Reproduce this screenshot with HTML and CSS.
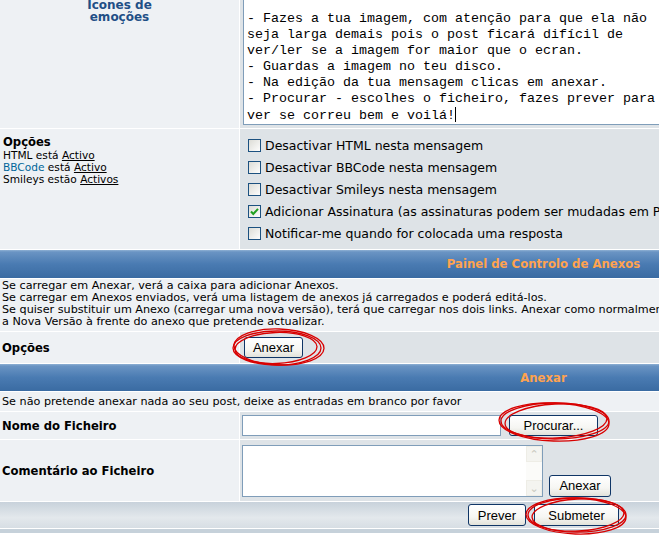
FILE: index.html
```html
<!DOCTYPE html>
<html lang="pt">
<head>
    <meta charset="UTF-8">
    <meta name="viewport" content="width=device-width, initial-scale=1.0">
    <title>Anexos</title>
    <link rel="stylesheet" href="styles.css">
</head>
<body>
    <div class="page">
        <table class="forumline">
            <colgroup>
                <col class="col-left">
                <col class="col-right">
            </colgroup>

            <!-- Mensagem -->
            <tr>
                <td class="row1 smilies"><a href="#" class="smilies-link">Ícones de<br>emoções</a></td>
                <td class="row2 msg-cell">
                    <div class="post-box">&nbsp;<br>- Fazes a tua imagem, com atenção para que ela não<br>seja larga demais pois o post ficará difícil de<br>ver/ler se a imagem for maior que o ecran.<br>- Guardas a imagem no teu disco.<br>- Na edição da tua mensagem clicas em anexar.<br>- Procurar - escolhes o ficheiro, fazes prever para<br>ver se correu bem e voilá!<span class="caret"></span></div>
                </td>
            </tr>

            <!-- Opções da mensagem -->
            <tr>
                <td class="row1 opts-info">
                    <div class="label">Opções</div>
                    <div class="small">HTML está <a href="#" class="u">Activo</a></div>
                    <div class="small"><a href="#" class="bb">BBCode</a> está <a href="#" class="u">Activo</a></div>
                    <div class="small">Smileys estão <a href="#" class="u">Activos</a></div>
                </td>
                <td class="row2 opts-list">
                    <div class="opt"><span class="cb"></span>Desactivar HTML nesta mensagem</div>
                    <div class="opt"><span class="cb"></span>Desactivar BBCode nesta mensagem</div>
                    <div class="opt"><span class="cb"></span>Desactivar Smileys nesta mensagem</div>
                    <div class="opt"><span class="cb checked"><svg width="11" height="11" viewBox="0 0 11 11"><path d="M2 5.5 L4.3 8 L9 2.8" fill="none" stroke="#21a121" stroke-width="2"/></svg></span>Adicionar Assinatura (as assinaturas podem ser mudadas em Perfil)</div>
                    <div class="opt"><span class="cb"></span>Notificar-me quando for colocada uma resposta</div>
                </td>
            </tr>

            <!-- Painel de anexos -->
            <tr>
                <th colspan="2" class="thHead h-painel">Painel de Controlo de Anexos</th>
            </tr>
            <tr>
                <td colspan="2" class="row1 info">
                    Se carregar em Anexar, verá a caixa para adicionar Anexos.<br>
                    Se carregar em Anexos enviados, verá uma listagem de anexos já carregados e poderá editá-los.<br>
                    Se quiser substituir um Anexo (carregar uma nova versão), terá que carregar nos dois links. Anexar como normalmente e depois carregar em Carregar<br>
                    a Nova Versão à frente do anexo que pretende actualizar.
                </td>
            </tr>
            <tr>
                <td class="row1 lbl r-opcoes"><span class="label">Opções</span></td>
                <td class="row2 r-opcoes-btn"><button class="btn btn-anexar">Anexar</button></td>
            </tr>

            <!-- Anexar -->
            <tr>
                <th colspan="2" class="thHead h-anexar">Anexar</th>
            </tr>
            <tr>
                <td colspan="2" class="row1 info-one">Se não pretende anexar nada ao seu post, deixe as entradas em branco por favor</td>
            </tr>
            <tr>
                <td class="row1 lbl r-nome"><span class="label">Nome do Ficheiro</span></td>
                <td class="row2 r-nome-in">
                    <div class="file-row">
                        <span class="file-input"></span>
                        <button class="btn btn-procurar">Procurar...</button>
                    </div>
                </td>
            </tr>
            <tr>
                <td class="row1 lbl r-coment"><span class="label">Comentário ao Ficheiro</span></td>
                <td class="row2 r-coment-in">
                    <div class="coment-row">
                        <div class="coment-box">
                            <div class="scroll">
                                <span class="arrow">&#8963;</span>
                                <span class="arrow down">&#8964;</span>
                            </div>
                        </div>
                        <button class="btn btn-anexar2">Anexar</button>
                    </div>
                </td>
            </tr>

            <!-- Botões finais -->
            <tr>
                <td colspan="2" class="catBottom">
                    <button class="btn btn-prever">Prever</button>
                    <button class="btn btn-submeter">Submeter</button>
                </td>
            </tr>
        </table>
        <div class="strip"></div>
    </div>

    <!-- Marcas a vermelho -->
    <svg class="marks" width="659" height="551" viewBox="0 0 659 551">
        <g fill="none" stroke="#d80000" stroke-width="1.3">
            <ellipse cx="277" cy="348" rx="44" ry="17"/>
            <ellipse cx="276" cy="348" rx="41" ry="15.5" transform="rotate(-2 276 348)"/>
            <ellipse cx="279" cy="347" rx="45" ry="18" transform="rotate(2 279 347)"/>

            <ellipse cx="555" cy="421" rx="54" ry="18"/>
            <ellipse cx="556" cy="421" rx="51" ry="17" transform="rotate(-3 556 421)"/>
            <ellipse cx="554" cy="422" rx="55" ry="19" transform="rotate(2 554 422)"/>

            <ellipse cx="577" cy="515" rx="49" ry="17"/>
            <ellipse cx="578" cy="515" rx="46" ry="16" transform="rotate(-3 578 515)"/>
            <ellipse cx="576" cy="516" rx="50" ry="18" transform="rotate(2 576 516)"/>
        </g>
    </svg>
</body>
</html>
```

FILE: styles.css
```css
body {
    margin: 0;
    background: #fff;
    overflow: hidden;
    font-family: "DejaVu Sans", Verdana, sans-serif;
    color: #000;
}

.page {
    width: 1089px;
    margin: -9px 0 0 -1px;
}

.forumline {
    width: 1089px;
    table-layout: fixed;
    border-collapse: separate;
    border-spacing: 1px;
    background: #fff;
}

.col-left {
    width: 239px;
}

td, th {
    padding: 0;
    box-sizing: border-box;
}

.row1 {
    background: #eef1f4;
}

.row2 {
    background: #dee3e7;
}

a {
    color: #000;
}

/* Linha da mensagem */
.smilies {
    vertical-align: top;
    text-align: center;
    padding-top: 7px;
    font-size: 12px;
    line-height: 12px;
}

.smilies-link {
    color: #1f4f86;
    font-size: 12px;
    font-weight: bold;
    text-decoration: none;
}

.msg-cell {
    padding: 3px 0 3px 3px;
    vertical-align: top;
}

.post-box {
    width: 600px;
    background: #fff;
    border: 1px solid #7f9db9;
    border-top: none;
    padding: 0 3px;
    font-family: "Liberation Mono", "Courier New", monospace;
    font-size: 13.33px;
    line-height: 16px;
    white-space: nowrap;
}

.caret {
    display: inline-block;
    width: 1px;
    height: 15px;
    background: #000;
    vertical-align: -3px;
}

/* Opções */
.opts-info {
    vertical-align: top;
    padding: 6px 3px;
}

.label {
    font-size: 11.6px;
    font-weight: bold;
    line-height: 14px;
}

.small {
    font-size: 10.6px;
    line-height: 12px;
}

.u {
    color: #000;
    text-decoration: underline;
}

.bb {
    color: #006699;
    text-decoration: none;
}

.opts-list {
    padding: 5px 0 5px 8px;
    vertical-align: top;
}

.opt {
    height: 22px;
    display: flex;
    align-items: center;
    font-size: 12.5px;
    white-space: nowrap;
}

.cb {
    width: 11px;
    height: 11px;
    border: 1px solid #1c5180;
    background: linear-gradient(135deg, #dcdcd6, #fdfdfd);
    margin-right: 4px;
    display: flex;
    align-items: center;
    justify-content: center;
    flex: none;
}

/* Cabeçalhos */
.thHead {
    height: 28px;
    background: linear-gradient(to bottom, #8fb1d4 0, #6a94c3 2px, #4a7bb2 50%, #3a6ba2 100%);
    color: #ffa34f;
    font-size: 11.7px;
    font-weight: bold;
    text-align: center;
}

.h-anexar {
    height: 27px;
}

.info {
    height: 52px;
    padding: 1px 2px 3px;
    font-size: 11.2px;
    line-height: 12px;
    white-space: nowrap;
    vertical-align: top;
}

.info-one {
    height: 19px;
    padding: 0 2px;
    font-size: 11.2px;
    line-height: 12px;
}

.lbl {
    padding-left: 2px;
    vertical-align: middle;
    font-size: 11.6px;
}

.r-opcoes, .r-opcoes-btn {
    height: 31px;
}

.r-opcoes-btn {
    padding-left: 4px;
}

.r-nome, .r-nome-in {
    height: 27px;
}

.r-nome-in, .r-coment-in {
    padding-left: 2px;
}

.r-coment, .r-coment-in {
    height: 61px;
}

/* Botões estilo XP */
.btn {
    font-family: "Liberation Sans", Arial, sans-serif;
    font-size: 13px;
    height: 21px;
    padding: 0 6px;
    border: 1px solid #0f3566;
    border-radius: 3px;
    background: linear-gradient(to bottom, #ffffff 0, #f6f6f3 60%, #e2e2da 100%);
    color: #000;
    box-sizing: border-box;
}

.btn-anexar {
    width: 59px;
    display: block;
}

.file-row, .coment-row {
    display: flex;
    gap: 8px;
}

.file-input {
    width: 259px;
    height: 21px;
    box-sizing: border-box;
    border: 1px solid #7f9db9;
    background: #fff;
}

.btn-procurar {
    width: 89px;
}

.coment-row {
    gap: 6px;
    align-items: flex-end;
}

.coment-box {
    width: 301px;
    height: 52px;
    box-sizing: border-box;
    border: 1px solid #7f9db9;
    background: #fff;
    display: flex;
    justify-content: flex-end;
}

.scroll {
    width: 16px;
    background: #fbfbf9;
    display: flex;
    flex-direction: column;
    justify-content: space-between;
}

.arrow {
    height: 16px;
    border: 1px solid #eeede6;
    box-sizing: border-box;
    background: #f4f4f0;
    color: #c9c9bf;
    font-size: 11px;
    line-height: 16px;
    text-align: center;
}

.btn-anexar2 {
    width: 62px;
    height: 22px;
}

.catBottom {
    height: 26px;
    text-align: center;
    vertical-align: middle;
    background: linear-gradient(to bottom, #c8d2db 0, #e3e8ec 60%, #d7dee4 100%);
}

.btn-prever {
    width: 58px;
    height: 22px;
    margin-right: 3px;
}

.btn-submeter {
    width: 85px;
    height: 22px;
}

.strip {
    height: 4px;
    background: #c6d1da;
}

.marks {
    position: absolute;
    top: 0;
    left: 0;
    pointer-events: none;
}
```
